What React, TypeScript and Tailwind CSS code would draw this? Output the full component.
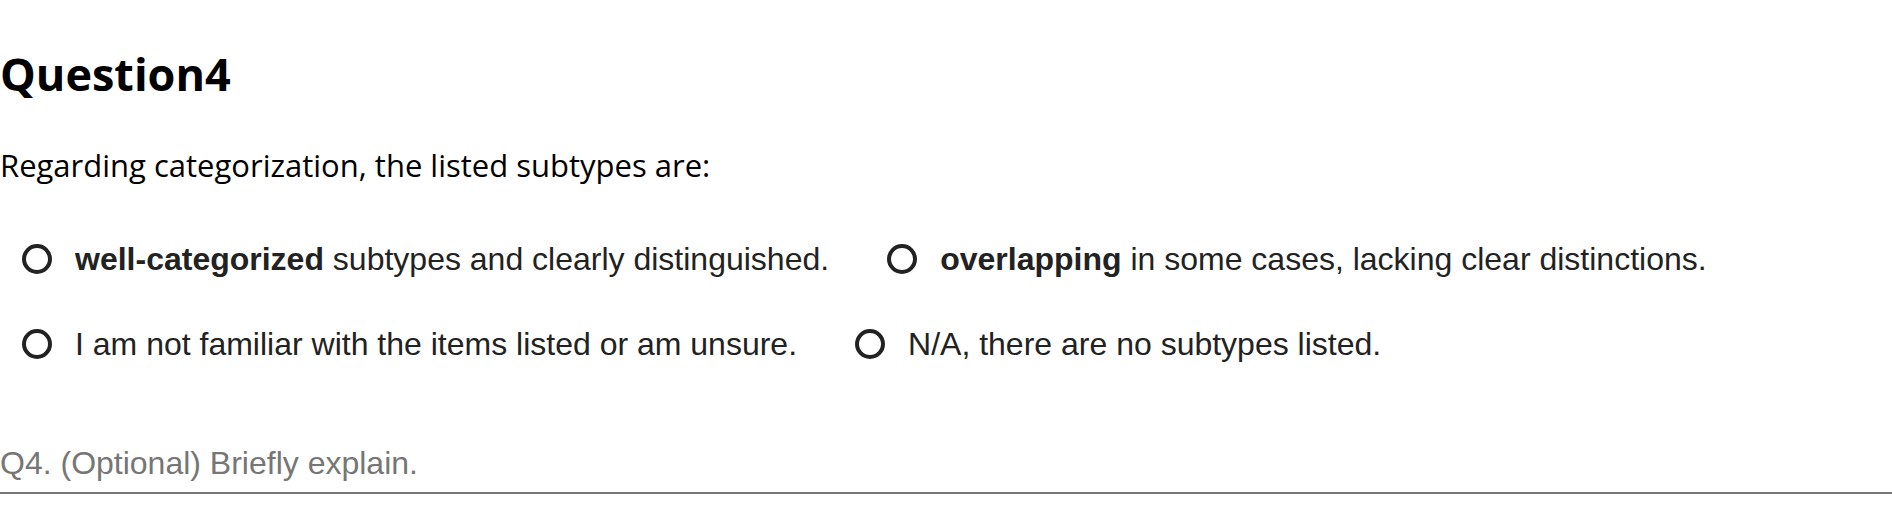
import { useState } from "react";

const options = [
  { id: "well", bold: "well-categorized", rest: " subtypes and clearly distinguished." },
  { id: "overlap", bold: "overlapping", rest: " in some cases, lacking clear distinctions." },
  { id: "unsure", bold: "", rest: "I am not familiar with the items listed or am unsure." },
  { id: "na", bold: "", rest: "N/A, there are no subtypes listed." },
];

const RadioOption = ({
  bold,
  rest,
  checked,
  onSelect,
}: {
  bold: string;
  rest: string;
  checked: boolean;
  onSelect: () => void;
}) => (
  <label
    onClick={onSelect}
    className="mr-[36px] flex h-[85px] cursor-pointer items-center pl-[22px] text-[32px] text-[#222] font-['Liberation_Sans',Arial,sans-serif]"
  >
    <span className="flex h-[30px] w-[30px] shrink-0 items-center justify-center rounded-full border-[4px] border-[#222]">
      {checked && <span className="h-[12px] w-[12px] rounded-full bg-[#222]" />}
    </span>
    <span className="ml-[23px] whitespace-nowrap">
      {bold && <b className="font-bold">{bold}</b>}
      {rest}
    </span>
  </label>
);

export default function App() {
  const [selected, setSelected] = useState("");
  const [note, setNote] = useState("");

  return (
    <div className="h-[516px] w-full overflow-hidden bg-white">
      <h2 className="pt-[47px] text-[45px] leading-[54px] font-bold text-black font-['Open_Sans','Noto_Sans',sans-serif]">
        Question4
      </h2>
      <p className="mt-[46px] text-[31px] leading-[36px] text-black font-['Open_Sans','Noto_Sans',sans-serif]">
        Regarding categorization, the listed subtypes are:
      </p>
      <div className="mt-[33px] flex flex-col">
        <div className="flex">
          <RadioOption {...options[0]} checked={selected === options[0].id} onSelect={() => setSelected(options[0].id)} />
          <RadioOption {...options[1]} checked={selected === options[1].id} onSelect={() => setSelected(options[1].id)} />
        </div>
        <div className="flex">
          <RadioOption {...options[2]} checked={selected === options[2].id} onSelect={() => setSelected(options[2].id)} />
          <RadioOption {...options[3]} checked={selected === options[3].id} onSelect={() => setSelected(options[3].id)} />
        </div>
      </div>
      <div className="mt-[57px] border-b-[2px] border-[#767676] pb-[9px]">
        <input
          value={note}
          onChange={(e) => setNote(e.target.value)}
          placeholder="Q4. (Optional) Briefly explain."
          className="block h-[40px] w-full bg-transparent text-[32px] text-[#222] outline-none placeholder:text-[#767676] font-['Liberation_Sans',Arial,sans-serif]"
        />
      </div>
    </div>
  );
}
